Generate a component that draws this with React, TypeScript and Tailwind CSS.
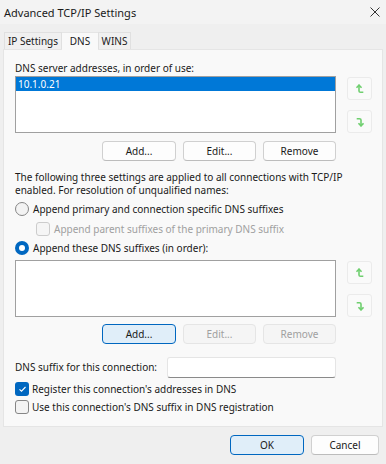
import React from 'react';

const font = { fontFamily: '"Noto Sans", "Open Sans", sans-serif' };

const UpArrow = () => (
  <svg width="8" height="10" viewBox="0 0 8 10" fill="none" stroke="#6fcf6f" strokeWidth="1.6" strokeLinecap="square">
    <path d="M1 3.2 L3 1.2 L5 3.2" />
    <path d="M3 1.5 V7 Q3 8.3 4.5 8.3 H6.5" />
  </svg>
);

const DownArrow = () => (
  <svg width="8" height="10" viewBox="0 0 8 10" fill="none" stroke="#6fcf6f" strokeWidth="1.6" strokeLinecap="square">
    <path d="M1.5 1.7 H3.5 Q5 1.7 5 3 V8.5" />
    <path d="M3 6.8 L5 8.8 L7 6.8" />
  </svg>
);

const Btn = ({ label, disabled, focused, w = 'w-[73px]' }: { label: string; disabled?: boolean; focused?: boolean; w?: string }) => (
  <div
    className={`${w} h-[20px] rounded-[4px] border flex items-center justify-center ${
      disabled
        ? 'bg-[#f5f5f5] border-[#e5e5e5] text-[#a0a0a0]'
        : focused
        ? 'bg-[#e0eef9] border-[#0067c0] text-[#1a1a1a]'
        : 'bg-[#fdfdfd] border-[#d0d0d0] border-b-[#bcbcbc] text-[#1a1a1a]'
    }`}
  >
    {label}
  </div>
);

const ArrowBtn = ({ down }: { down?: boolean }) => (
  <div className="w-[25px] h-[23px] rounded-[3px] border border-[#ebebeb] bg-[#fafafa] flex items-center justify-center">
    {down ? <DownArrow /> : <UpArrow />}
  </div>
);

const ListRow = ({ children }: { children?: React.ReactNode }) => (
  <div className="flex">
    <div className="w-[321px] h-[57px] border border-[#a0a0a0] bg-white">{children}</div>
    <div className="ml-[11px] flex flex-col gap-[10px] pt-[1px]">
      <ArrowBtn />
      <ArrowBtn down />
    </div>
  </div>
);

const Radio = ({ checked }: { checked?: boolean }) =>
  checked ? (
    <div className="w-[14px] h-[14px] rounded-full bg-[#0067c0] flex items-center justify-center">
      <div className="w-[6px] h-[6px] rounded-full bg-white" />
    </div>
  ) : (
    <div className="w-[14px] h-[14px] rounded-full border border-[#868686] bg-[#f3f3f3]" />
  );

const Check = ({ checked, disabled }: { checked?: boolean; disabled?: boolean }) =>
  checked ? (
    <div className="w-[14px] h-[14px] rounded-[3px] bg-[#0067c0] flex items-center justify-center">
      <svg width="9" height="8" viewBox="0 0 9 8" fill="none" stroke="white" strokeWidth="1.1">
        <path d="M1.5 4.3 L3.5 6.2 L7.5 2" />
      </svg>
    </div>
  ) : (
    <div className={`w-[14px] h-[14px] rounded-[3px] border ${disabled ? 'border-[#cccccc] bg-[#f5f5f5]' : 'border-[#868686] bg-[#f3f3f3]'}`} />
  );

export default function App() {
  return (
    <div className="w-[386px] h-[464px] bg-[#efefef] flex flex-col text-[#1a1a1a] leading-[15px] text-[10px] whitespace-nowrap" style={font}>
      <div className="h-[24px] bg-[#f3f3f3] flex items-center justify-between pl-[4px] pr-[6px]">
        <span className="text-[11px]">Advanced TCP/IP Settings</span>
        <svg width="10" height="10" viewBox="0 0 10 10" stroke="#333" strokeWidth="1">
          <path d="M0.5 0.5 L9.5 9.5 M9.5 0.5 L0.5 9.5" />
        </svg>
      </div>

      <div className="flex items-end h-[25px] pl-[4px]">
        <div className="w-[58px] h-[17px] border border-b-0 border-[#e0e0e0] bg-[#f0f0f0] flex items-center justify-center">IP Settings</div>
        <div className="w-[36px] h-[18px] border-t border-[#e5e5e5] bg-[#f9f9f9] flex items-start justify-center pt-[1px] relative z-10 mb-[-1px]">DNS</div>
        <div className="w-[33px] h-[17px] border border-b-0 border-[#e0e0e0] bg-[#f0f0f0] flex items-center justify-center">WINS</div>
      </div>

      <div className="mx-[3px] h-[378px] border border-[#e5e5e5] bg-[#f9f9f9] pl-[11px] pt-[11px] flex flex-col">
        <div className="h-[15px]">DNS server addresses, in order of use:</div>
        <ListRow>
          <div className="h-[14px] bg-[#0078d7] text-white pl-[2px] leading-[14px]">10.1.0.21</div>
        </ListRow>
        <div className="w-[321px] mt-[8px] flex justify-end gap-[7px]">
          <Btn label="Add..." w="w-[74px]" />
          <Btn label="Edit..." />
          <Btn label="Remove" />
        </div>

        <div className="mt-[10px] leading-[13px]">
          The following three settings are applied to all connections with TCP/IP
          <br />
          enabled. For resolution of unqualified names:
        </div>

        <div className="mt-[4px] h-[16px] flex items-center gap-[4px]">
          <Radio />
          <span>Append primary and connection specific DNS suffixes</span>
        </div>
        <div className="mt-[4px] h-[16px] flex items-center gap-[4px] pl-[21px] text-[#a0a0a0]">
          <Check disabled />
          <span>Append parent suffixes of the primary DNS suffix</span>
        </div>
        <div className="mt-[3px] h-[16px] flex items-center gap-[4px]">
          <Radio checked />
          <span>Append these DNS suffixes (in order):</span>
        </div>

        <div className="mt-[4px]">
          <ListRow />
        </div>
        <div className="w-[321px] mt-[7px] flex justify-end gap-[7px]">
          <Btn label="Add..." w="w-[74px]" focused />
          <Btn label="Edit..." disabled />
          <Btn label="Remove" disabled />
        </div>

        <div className="mt-[13px] h-[21px] flex items-center">
          <span className="w-[152px]">DNS suffix for this connection:</span>
          <div className="w-[169px] h-[21px] bg-white border border-[#e5e5e5] border-b-[#8a8a8a] rounded-[3px]" />
        </div>
        <div className="mt-[3px] h-[16px] flex items-center gap-[3px]">
          <Check checked />
          <span>Register this connection's addresses in DNS</span>
        </div>
        <div className="mt-[2px] h-[16px] flex items-center gap-[3px]">
          <Check />
          <span>Use this connection's DNS suffix in DNS registration</span>
        </div>
      </div>

      <div className="flex justify-end gap-[7px] pr-[7px] mt-[8px]">
        <Btn label="OK" w="w-[74px]" focused />
        <Btn label="Cancel" w="w-[68px]" />
      </div>
    </div>
  );
}
